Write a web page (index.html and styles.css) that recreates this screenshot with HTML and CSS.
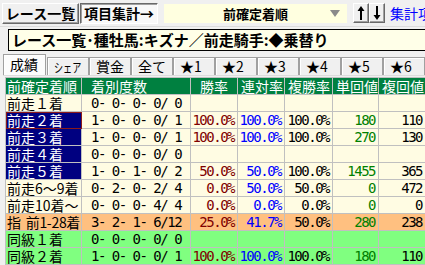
FILE: index.html
```html
<!doctype html>
<html>
<head>
<meta charset="utf-8">
<title>項目集計</title>
<link rel="stylesheet" href="styles.css">
</head>

<body>
<div class="toolbar">
	<span class="btn">レース一覧</span>
	<span class="btn on">項目集計→</span>
	<div class="combo"><span class="combo-text">前確定着順</span><span class="combo-arrow"></span></div>
	<span class="btn arrow"><svg width="8" height="16" viewBox="0 0 8 16"><path d="M4 1 L0.5 6 H3 V15 H5 V6 H7.5 Z" fill="#000"/></svg></span>
	<span class="btn arrow"><svg width="8" height="16" viewBox="0 0 8 16"><path d="M4 15 L0.5 10 H3 V1 H5 V10 H7.5 Z" fill="#000"/></svg></span>
	<span class="link">集計項目</span>
</div>
<div class="title">レース一覧･種牡馬:キズナ／前走騎手:◆乗替り</div>
<ul class="tabs">
	<li class="cur">成績</li>
	<li><span class="narrow">シェア</span></li>
	<li>賞金</li>
	<li>全て</li>
	<li>★1</li>
	<li>★2</li>
	<li>★3</li>
	<li>★4</li>
	<li>★5</li>
	<li>★6</li>
</ul>
<table class="grid">
	<colgroup>
		<col class="c1"><col class="c2"><col class="c3"><col class="c4"><col class="c5"><col class="c6"><col class="c7">
	</colgroup>
	<tr class="head">
		<th class="h1">前確定着順</th><th class="h2">着別度数</th><th class="h3">勝率</th><th>連対率</th><th>複勝率</th><th>単回値</th><th>複回値</th>
	</tr>
	<tr>
		<td class="name">前走１着</td><td class="cnt">0- 0- 0- 0/ 0</td><td></td><td></td><td></td><td></td><td></td>
	</tr>
	<tr>
		<td class="name sel focus">前走２着</td><td class="cnt">1- 0- 0- 0/ 1</td><td class="num win">100.0%</td><td class="num ren">100.0%</td><td class="num">100.0%</td><td class="num tan">180</td><td class="num">110</td>
	</tr>
	<tr>
		<td class="name sel">前走３着</td><td class="cnt">1- 0- 0- 0/ 1</td><td class="num win">100.0%</td><td class="num ren">100.0%</td><td class="num">100.0%</td><td class="num tan">270</td><td class="num">130</td>
	</tr>
	<tr>
		<td class="name sel">前走４着</td><td class="cnt">0- 0- 0- 0/ 0</td><td></td><td></td><td></td><td></td><td></td>
	</tr>
	<tr>
		<td class="name sel">前走５着</td><td class="cnt">1- 0- 1- 0/ 2</td><td class="num win">50.0%</td><td class="num ren">50.0%</td><td class="num">100.0%</td><td class="num tan">1455</td><td class="num">365</td>
	</tr>
	<tr>
		<td class="name">前走6～9着</td><td class="cnt">0- 2- 0- 2/ 4</td><td class="num win">0.0%</td><td class="num ren">50.0%</td><td class="num">50.0%</td><td class="num tan">0</td><td class="num">472</td>
	</tr>
	<tr>
		<td class="name">前走10着～</td><td class="cnt">0- 0- 0- 4/ 4</td><td class="num win">0.0%</td><td class="num ren">0.0%</td><td class="num">0.0%</td><td class="num tan">0</td><td class="num">0</td>
	</tr>
	<tr class="orange">
		<td class="name tight">指<span class="gap"></span>前1-28着</td><td class="cnt">3- 2- 1- 6/12</td><td class="num win">25.0%</td><td class="num ren">41.7%</td><td class="num">50.0%</td><td class="num tan">280</td><td class="num">238</td>
	</tr>
	<tr class="green">
		<td class="name">同級１着</td><td class="cnt">0- 0- 0- 0/ 0</td><td></td><td></td><td></td><td></td><td></td>
	</tr>
	<tr class="green">
		<td class="name">同級２着</td><td class="cnt">1- 0- 0- 0/ 1</td><td class="num win">100.0%</td><td class="num ren">100.0%</td><td class="num">100.0%</td><td class="num tan">180</td><td class="num">110</td>
	</tr>
</table>
</body>
</html>
```

FILE: styles.css
```css
*{margin:0; padding:0; list-style:none;}
body{width:425px; height:265px; overflow:hidden; background:#f0f0f0; font-family:"Noto Sans CJK JP",sans-serif; font-size:14px; color:#000;}

/* 上のツールバー */
.toolbar{display:flex; align-items:center; height:26px; padding:0 2px; border-bottom:1px solid #dcdcdc; overflow:hidden;}
.toolbar > *{flex-shrink:0;}
.btn{display:flex; align-items:center; justify-content:center; height:21px; box-sizing:border-box; width:77px; background:#f0f0f0; border:1px solid; border-color:#fff #696969 #696969 #fff; box-shadow:inset -1px -1px 0 #a0a0a0; font-weight:bold; font-size:14px; line-height:1;}
.btn.on{background:#f8f8f8; border-color:#696969 #fff #fff #696969; box-shadow:inset 1px 1px 0 #a0a0a0; margin-left:1px; width:78px;}
.btn.arrow{width:16px; height:20px;}
.combo{display:flex; align-items:center; width:185px; height:21px; box-sizing:border-box; margin:0 5px; background:#ffffe0; border:1px solid #f0f0f0;}
.combo-text{flex:1; text-align:center; font-weight:bold; font-size:13px; padding-left:17px;}
.combo-arrow{width:0; height:0; border-left:5px solid transparent; border-right:5px solid transparent; border-top:7px solid #8a8a8a; margin-right:7px;}
.link{margin-left:5px; color:#0000ff; font-size:14px; white-space:nowrap;}

/* タイトル */
.title{height:22px; box-sizing:border-box; margin:2px 0 0 8px; padding-left:3px; background:#ffffe8; border:1px solid #000; border-right:none; font-weight:bold; font-size:15px; line-height:20px; white-space:nowrap;}

/* タブ */
.tabs{display:flex; align-items:flex-end; height:21px; margin:3px 0 0 3px; border-bottom:1px solid #dcdcdc;}
.tabs li{width:42px; height:18px; box-sizing:border-box; background:#f0f0f0; border:1px solid #a0a0a0; border-bottom:none; box-shadow:inset 1px 1px 0 #fff; font-size:14px; line-height:17px; padding-left:6px; white-space:nowrap; overflow:hidden; flex-shrink:0;}
.tabs li.cur{height:21px; width:43px; background:#fcfcfc; line-height:19px; margin-right:1px;}
.tabs .narrow{display:inline-block; transform:scaleX(0.7); transform-origin:left center; font-size:13px;}

/* 表 */
.grid{margin:1px 0 0 5px; border-collapse:collapse; table-layout:fixed; width:420px; background:#fffce3;}
.grid col.c1{width:76px;}
.grid col.c2{width:109px;}
.grid col.c3{width:47px;}
.grid col.c4{width:47px;}
.grid col.c5{width:48px;}
.grid col.c6{width:46px;}
.grid col.c7{width:47px;}
.grid th, .grid td{height:16px; padding:0; border:1px solid #c0c0c0; line-height:16px; white-space:nowrap; overflow:hidden;}
.grid th{background:#008040; color:#fff; font-weight:normal; text-align:left; padding-left:3px;}
.grid th.h1{padding-left:1px;}
.grid th.h2{padding-left:9px;}
.grid th.h3{padding-left:9px;}
.grid td.name{padding-left:1px;}
.grid td.tight{letter-spacing:-0.3px;}
.grid td .gap{display:inline-block; width:5px;}
.grid td.sel{background:#000080; color:#fff;}
.grid td.focus{outline:1px solid #8b1a1a; outline-offset:-1px;}
.grid td.cnt, .grid td.num{font-family:"DejaVu Sans Mono",monospace; font-size:14px; letter-spacing:-1.5px;}
.grid td.cnt{padding-left:9px;}
.grid td.num{text-align:right; padding-right:3px;}
.grid td.win{color:#800000;}
.grid td.ren{color:#0000ff;}
.grid td.tan{color:#008000;}
.grid tr.orange td{background:#ffc080;}
.grid tr.green td{background:#80ff80;}
```
